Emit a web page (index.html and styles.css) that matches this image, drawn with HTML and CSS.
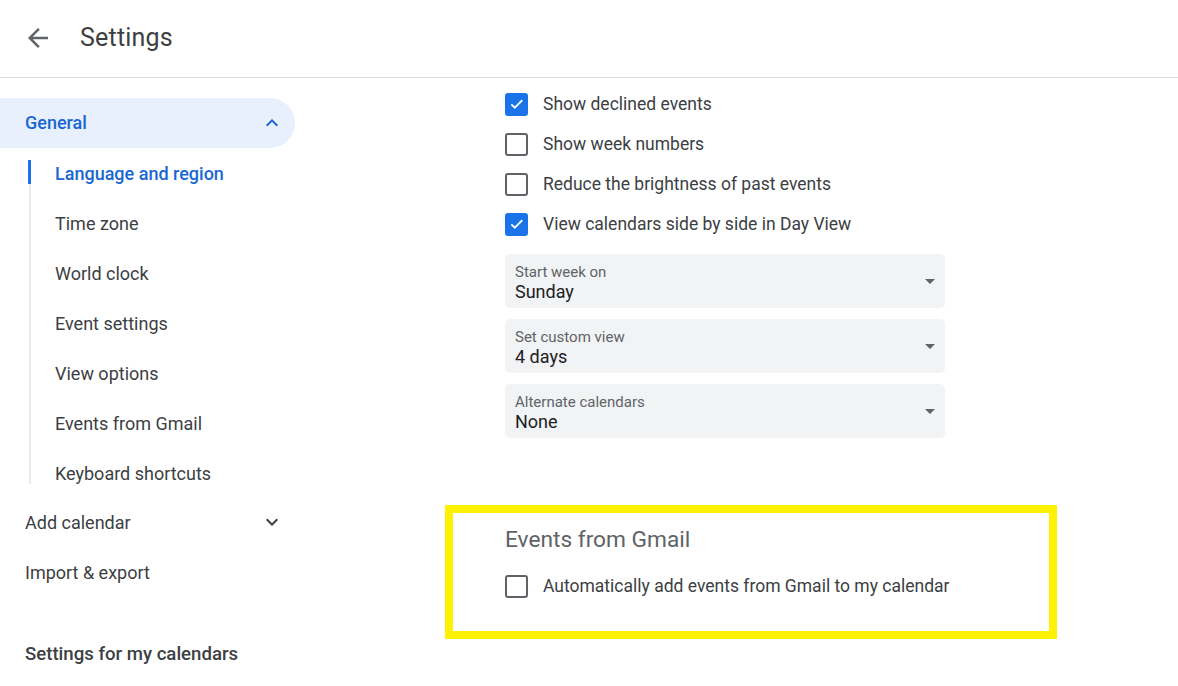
FILE: index.html
```html
<!DOCTYPE html>
<html lang="en">
<head>
    <meta charset="UTF-8">
    <title>Settings</title>
    <link rel="stylesheet" href="styles.css">
</head>
<body>
    <header class="cabecera">
        <button class="atras" aria-label="Back">
            <svg viewBox="0 0 24 24" width="30" height="30"><path fill="#5f6368" d="M20 11H7.83l5.59-5.59L12 4l-8 8 8 8 1.41-1.41L7.83 13H20v-2z"/></svg>
        </button>
        <h1 class="titulo">Settings</h1>
    </header>

    <div class="cuerpo">
        <nav class="lateral">
            <div class="grupo activo">
                <span>General</span>
                <svg viewBox="0 0 24 24" width="24" height="24"><path fill="#1967d2" d="M12 8l-6 6 1.41 1.41L12 10.83l4.59 4.58L18 14z"/></svg>
            </div>
            <ul class="sublista">
                <li class="actual">Language and region</li>
                <li>Time zone</li>
                <li>World clock</li>
                <li>Event settings</li>
                <li>View options</li>
                <li>Events from Gmail</li>
                <li>Keyboard shortcuts</li>
            </ul>
            <div class="grupo">
                <span>Add calendar</span>
                <svg viewBox="0 0 24 24" width="24" height="24"><path fill="#3c4043" d="M16.59 8.59L12 13.17 7.41 8.59 6 10l6 6 6-6z"/></svg>
            </div>
            <div class="grupo">
                <span>Import &amp; export</span>
            </div>
            <h2 class="seccion-lateral">Settings for my calendars</h2>
        </nav>

        <main class="contenido">
            <div class="opcion">
                <span class="casilla marcada"><svg viewBox="0 0 24 24" width="18" height="18"><path fill="none" stroke="#fff" stroke-width="2.4" d="M4.5 12.5l4.5 4.5 10-10"/></svg></span>
                <span>Show declined events</span>
            </div>
            <div class="opcion">
                <span class="casilla"></span>
                <span>Show week numbers</span>
            </div>
            <div class="opcion">
                <span class="casilla"></span>
                <span>Reduce the brightness of past events</span>
            </div>
            <div class="opcion">
                <span class="casilla marcada"><svg viewBox="0 0 24 24" width="18" height="18"><path fill="none" stroke="#fff" stroke-width="2.4" d="M4.5 12.5l4.5 4.5 10-10"/></svg></span>
                <span>View calendars side by side in Day View</span>
            </div>

            <div class="selectores">
                <div class="selector">
                    <div>
                        <div class="etiqueta">Start week on</div>
                        <div class="valor">Sunday</div>
                    </div>
                    <span class="flecha"></span>
                </div>
                <div class="selector">
                    <div>
                        <div class="etiqueta">Set custom view</div>
                        <div class="valor">4 days</div>
                    </div>
                    <span class="flecha"></span>
                </div>
                <div class="selector">
                    <div>
                        <div class="etiqueta">Alternate calendars</div>
                        <div class="valor">None</div>
                    </div>
                    <span class="flecha"></span>
                </div>
            </div>

            <!-- Sección resaltada -->
            <section class="resaltado">
                <h2 class="subtitulo">Events from Gmail</h2>
                <div class="opcion">
                    <span class="casilla"></span>
                    <span>Automatically add events from Gmail to my calendar</span>
                </div>
            </section>
        </main>
    </div>
</body>
</html>
```

FILE: styles.css
```css
* {
    box-sizing: border-box;
}
body {
    margin: 0;
    font-family: Roboto, "Liberation Sans", Arial, sans-serif;
    color: #3c4043;
    background: #fff;
    height: 686px;
    overflow: hidden;
}
.cabecera {
    height: 78px;
    display: flex;
    align-items: center;
    border-bottom: 1px solid #dadce0;
    padding-bottom: 2px;
}
.atras {
    background: none;
    border: none;
    padding: 0;
    margin-left: 23px;
    width: 30px;
    height: 30px;
    display: flex;
}
.titulo {
    margin: 0 0 0 27px;
    font-size: 25px;
    font-weight: 400;
    color: #3c4043;
    letter-spacing: 0.2px;
}
.cuerpo {
    display: flex;
}
.lateral {
    width: 295px;
    flex-shrink: 0;
    padding-top: 20px;
    font-size: 18px;
}
.grupo {
    height: 50px;
    display: flex;
    align-items: center;
    justify-content: space-between;
    padding: 0 11px 0 25px;
}
.grupo.activo {
    background: #e8f0fe;
    color: #1967d2;
    font-weight: 500;
    border-radius: 0 25px 25px 0;
}
.grupo.activo span {
    margin-top: -1px;
}
.sublista {
    list-style: none;
    margin: 12px 0 13px 29px;
    padding: 0;
    border-left: 2px solid #e8eaed;
    display: flex;
    flex-direction: column;
    gap: 26px;
}
.sublista li {
    height: 24px;
    line-height: 28px;
    padding-left: 24px;
    position: relative;
}
.sublista li.actual {
    color: #1967d2;
    font-weight: 500;
}
.sublista li.actual::before {
    content: "";
    position: absolute;
    left: -3px;
    top: 0;
    width: 3px;
    height: 24px;
    background: #1a73e8;
}
.seccion-lateral {
    margin: 45px 0 0 25px;
    font-size: 18.6px;
    font-weight: 500;
    line-height: 24px;
    color: #3c4043;
}
.contenido {
    padding: 6px 0 0 210px;
    font-size: 17.5px;
}
.opcion {
    height: 40px;
    display: flex;
    align-items: center;
    gap: 15px;
}
.casilla {
    width: 23px;
    height: 23px;
    border: 2px solid #5f6368;
    border-radius: 3px;
    display: flex;
    align-items: center;
    justify-content: center;
}
.casilla.marcada {
    background: #1a73e8;
    border-color: #1a73e8;
}
.selectores {
    margin-top: 10px;
    display: flex;
    flex-direction: column;
    gap: 11px;
}
.selector {
    width: 440px;
    height: 54px;
    background: #f1f3f4;
    border-radius: 5px;
    padding: 9px 10px 0 10px;
    display: flex;
    justify-content: space-between;
}
.etiqueta {
    font-size: 15px;
    line-height: 18px;
    color: #5f6368;
}
.valor {
    font-size: 18px;
    line-height: 22px;
    color: #202124;
}
.flecha {
    margin-top: 16px;
    width: 0;
    height: 0;
    border-left: 5px solid transparent;
    border-right: 5px solid transparent;
    border-top: 5px solid #5f6368;
}
.resaltado {
    margin: 67px 0 0 -60px;
    width: 612px;
    height: 134px;
    border: 8px solid #fff200;
    padding: 13px 0 0 52px;
}
.subtitulo {
    margin: 0 0 12px 0;
    font-size: 22.7px;
    font-weight: 400;
    line-height: 28px;
    color: #5f6368;
}
```
